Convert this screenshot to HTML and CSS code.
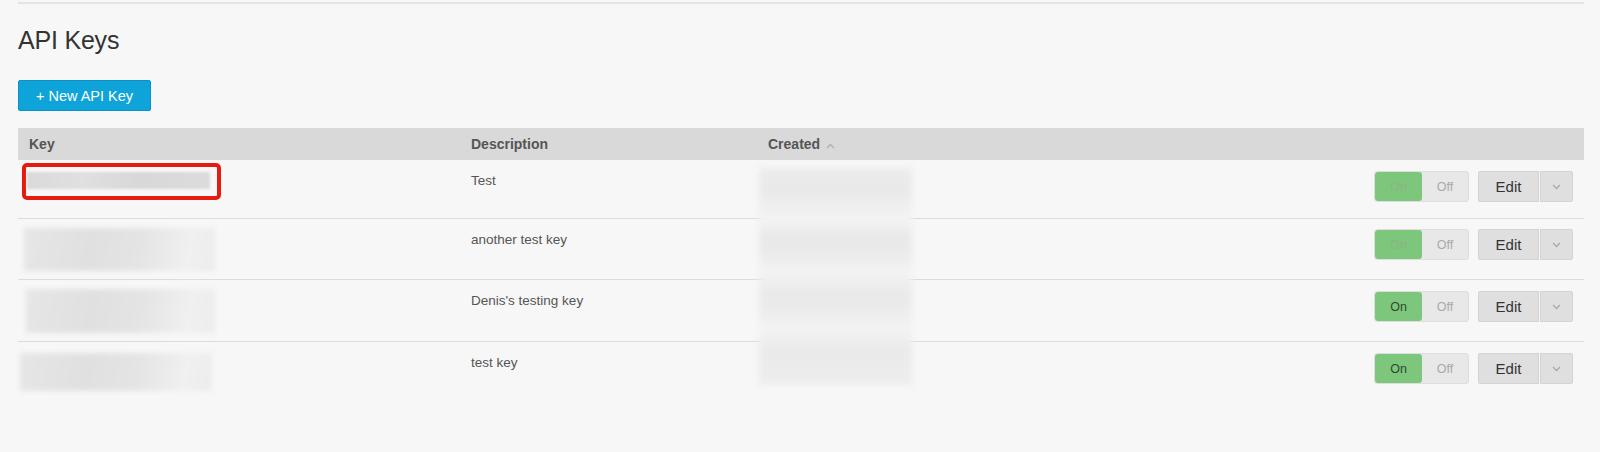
FILE: index.html
```html
<!DOCTYPE html>
<html>
<head>
<meta charset="utf-8">
<link rel="stylesheet" href="styles.css">
</head>
<body>
<div class="page">
  <div class="topline"></div>
  <h1 class="title">API Keys</h1>
  <button class="btn-new">+ New API Key</button>
  <div class="table">
    <div class="thead">
      <div class="th">Key</div>
      <div class="th">Description</div>
      <div class="th">Created <svg class="sort" width="9" height="6" viewBox="0 0 9 6"><path d="M1 5 L4.5 1.5 L8 5" fill="none" stroke="#b0b0b0" stroke-width="1.4"/></svg></div>
      <div class="th"></div>
    </div>

    <div class="row row1">
      <div class="td key"><div class="hl"><div class="blur bar"></div></div></div>
      <div class="td desc">Test</div>
      <div class="td"></div>
      <div class="td actions">
        <div class="toggle"><span class="on dis">On</span><span class="off">Off</span></div>
        <div class="split"><span class="edit">Edit</span><span class="caret"><svg width="9" height="6" viewBox="0 0 9 6"><path d="M1 1 L4.5 4.5 L8 1" fill="none" stroke="#a8a8a8" stroke-width="1.3"/></svg></span></div>
      </div>
    </div>

    <div class="row row2">
      <div class="td key"><div class="blur block b2"></div></div>
      <div class="td desc">another test key</div>
      <div class="td"></div>
      <div class="td actions">
        <div class="toggle"><span class="on dis">On</span><span class="off">Off</span></div>
        <div class="split"><span class="edit">Edit</span><span class="caret"><svg width="9" height="6" viewBox="0 0 9 6"><path d="M1 1 L4.5 4.5 L8 1" fill="none" stroke="#a8a8a8" stroke-width="1.3"/></svg></span></div>
      </div>
    </div>

    <div class="row row3">
      <div class="td key"><div class="blur block b3"></div></div>
      <div class="td desc">Denis's testing key</div>
      <div class="td"></div>
      <div class="td actions">
        <div class="toggle"><span class="on">On</span><span class="off">Off</span></div>
        <div class="split"><span class="edit">Edit</span><span class="caret"><svg width="9" height="6" viewBox="0 0 9 6"><path d="M1 1 L4.5 4.5 L8 1" fill="none" stroke="#a8a8a8" stroke-width="1.3"/></svg></span></div>
      </div>
    </div>

    <div class="row row4">
      <div class="td key"><div class="blur block b4"></div></div>
      <div class="td desc">test key</div>
      <div class="td"></div>
      <div class="td actions">
        <div class="toggle"><span class="on">On</span><span class="off">Off</span></div>
        <div class="split"><span class="edit">Edit</span><span class="caret"><svg width="9" height="6" viewBox="0 0 9 6"><path d="M1 1 L4.5 4.5 L8 1" fill="none" stroke="#a8a8a8" stroke-width="1.3"/></svg></span></div>
      </div>
    </div>

    <div class="created-blur"></div>
  </div>
</div>
</body>
</html>
```

FILE: styles.css
```css
* { box-sizing: border-box; }
html, body { margin: 0; padding: 0; background: #f7f7f7; }
body {
  font-family: "Liberation Sans", Arial, sans-serif;
  color: #555;
  width: 1600px;
  height: 452px;
  overflow: hidden;
}
.page { padding: 2px 16px 0 18px; }
.topline { height: 2px; background: #e4e4e4; }
.title {
  margin: 21px 0 0 0;
  font-size: 25px;
  line-height: 30px;
  font-weight: normal;
  color: #333;
  letter-spacing: -0.2px;
}
.btn-new {
  display: block;
  margin-top: 25px;
  width: 133px;
  height: 31px;
  padding: 0;
  background: #0ea4d9;
  border: 1px solid #0b92c4;
  border-radius: 2px;
  color: #fff;
  font-family: "Liberation Sans", Arial, sans-serif;
  font-size: 14.5px;
}
.table { position: relative; margin-top: 17px; }
.thead, .row {
  display: grid;
  grid-template-columns: 442px 297px 1fr auto;
}
.thead {
  height: 32px;
  background: #d9d9d9;
  align-items: center;
}
.th {
  padding-left: 11px;
  font-weight: bold;
  font-size: 14px;
  color: #555;
  display: flex;
  align-items: center;
}
.sort { margin-left: 6px; margin-top: 3px; }
.row { border-bottom: 1px solid #dcdcdc; }
.row1 { height: 59px; }
.row2 { height: 61px; }
.row3 { height: 62px; }
.row4 { height: 62px; border-bottom: none; }
.td { font-size: 13.5px; color: #555; }
.desc { padding: 11px 0 0 11px; line-height: 20px; }
.actions {
  display: flex;
  align-items: flex-start;
  gap: 9px;
  padding: 11px 11px 0 0;
}
.row2 .actions { padding-top: 10px; }
.toggle {
  display: flex;
  height: 31px;
  border-radius: 3px;
  overflow: hidden;
  background: #e8e8e8;
  border: 1px solid #dedede;
}
.toggle span {
  display: flex;
  align-items: center;
  justify-content: center;
  font-size: 12.5px;
}
.on { width: 47px; background: #7dc77c; color: #2f4a2f; border-radius: 3px; }
.on.dis { color: #8cb389; }
.off { width: 46px; color: #a9a9a9; }
.split { display: flex; gap: 1px; height: 31px; }
.split span {
  display: flex;
  align-items: center;
  justify-content: center;
  background: #dfdfdf;
  border: 1px solid #d3d3d3;
}
.edit { width: 61px; font-size: 15px; color: #333; border-radius: 2px 0 0 2px; }
.caret { width: 33px; border-radius: 0 2px 2px 0; }

.blur { filter: blur(2.5px); }
.hl {
  margin: 3px 0 0 4px;
  width: 199px;
  height: 37px;
  border: 4px solid #e8190f;
  border-radius: 5px;
  padding: 5px 7px 0 1px;
  background: #f7f7f7;
}
.bar {
  height: 17px;
  background: linear-gradient(90deg, #dadada, #e0e0e0 30%, #d8d8d8 60%, #dcdcdc);
  filter: blur(1px);
}
.block {
  height: 43px;
  width: 191px;
  background: linear-gradient(100deg, #e6e6e6 0%, #e0e0e0 35%, #e4e4e4 60%, #f0f0f0 85%, #ececec 100%);
}
.b2 { margin: 9px 0 0 6px; }
.b3 { margin: 9px 0 0 8px; height: 44px; width: 189px; }
.b4 { margin: 11px 0 0 2px; height: 38px; width: 192px; }
.created-blur {
  position: absolute;
  left: 741px;
  top: 40px;
  width: 153px;
  height: 217px;
  filter: blur(3px);
  background: linear-gradient(180deg,
    #ececec 0%, #e9e9e9 10%, #efefef 18%, #f3f3f3 24%,
    #e8e8e8 32%, #ebebeb 40%, #f3f3f3 48%,
    #e9e9e9 58%, #ececec 66%, #f3f3f3 74%,
    #eaeaea 84%, #ededed 100%);
}
```
